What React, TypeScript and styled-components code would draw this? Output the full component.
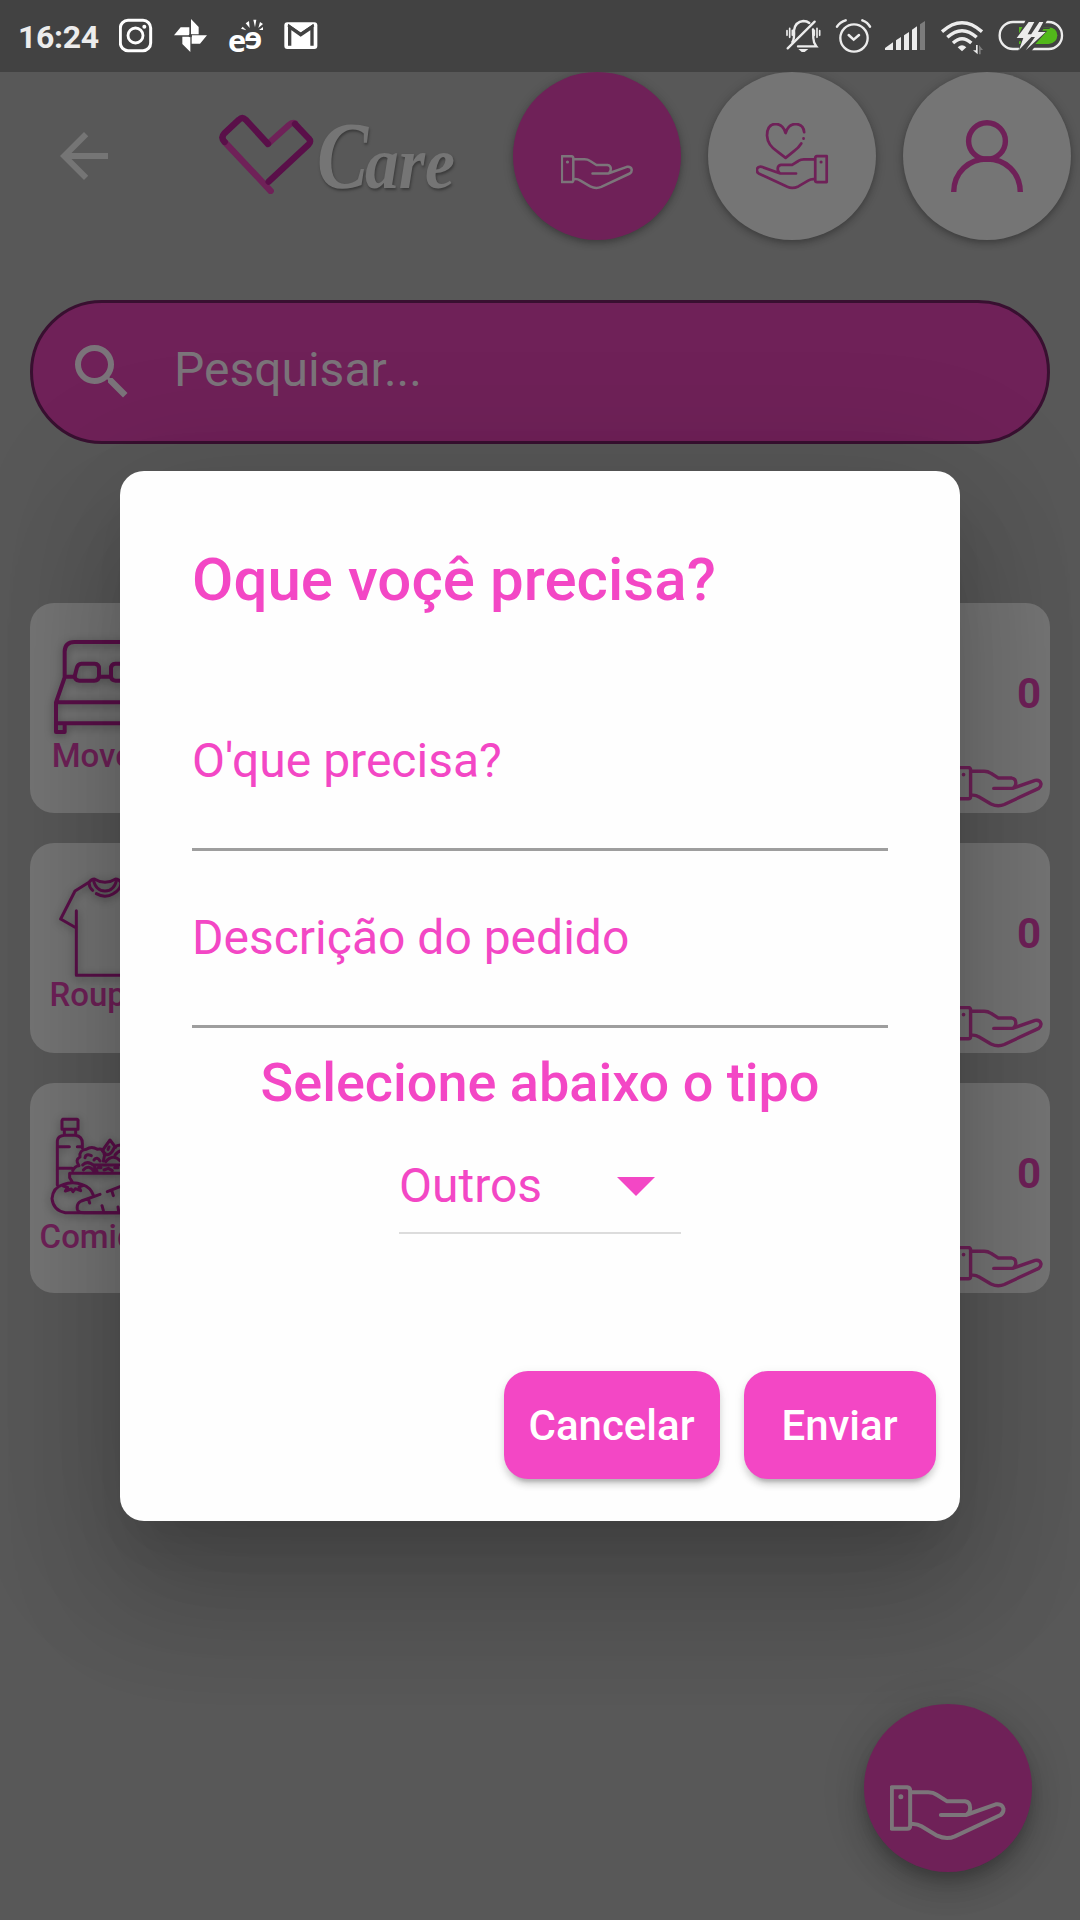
import React from 'react';
import styled, { createGlobalStyle } from 'styled-components';

const PINK = '#f347c5';
const PLUM = '#6f2158';
const DEEP = '#5a0f49';
const SILVER = '#757575';
const BACKDROP = '#585858';

const GlobalStyle = createGlobalStyle`
  * { box-sizing: border-box; }
  body { margin: 0; background: ${BACKDROP}; font-family: Roboto, "Liberation Sans", sans-serif; }
  h1, h2, p { margin: 0; }
  button, input { font: inherit; border: 0; margin: 0; padding: 0; }
  svg { display: block; flex: none; }
`;

const Screen = styled.div`
  width: 1080px;
  height: 1920px;
  overflow: hidden;
  background: ${BACKDROP};
  display: flex;
  flex-direction: column;
  position: relative;
`;

const StatusBar = styled.div`
  height: 72px;
  flex: none;
  background: #424242;
  display: flex;
  justify-content: space-between;
  padding: 0 16px 0 18px;
  position: relative;
  z-index: 1;
`;

const StatusGroup = styled.div<{ $gap: number }>`
  display: flex;
  align-items: center;
  gap: ${(p) => p.$gap}px;
`;

const Clock = styled.span`
  width: 80px;
  font-size: 32px;
  font-weight: 700;
  line-height: 72px;
  letter-spacing: -0.35px;
  padding-top: 1px;
  color: #ececec;
  white-space: nowrap;
`;

const Header = styled.header`
  height: 168px;
  flex: none;
  display: flex;
  align-items: center;
  padding: 0 9px 0 48px;
`;

const Logo = styled.div`
  display: flex;
  align-items: flex-start;
  height: 104px;
  width: 270px;
  margin-left: 97px;
`;

const Lettering = styled.span`
  display: flex;
  align-items: baseline;
  font-family: "Liberation Serif", serif;
  font-style: italic;
  font-weight: 700;
  color: ${SILVER};
  line-height: 104px;
  height: 104px;
  text-shadow: 1px 2px 3px rgba(0, 0, 0, 0.35);
`;

const Initial = styled.span`
  font-size: 96px;
  width: 48px;
  transform: scaleX(0.8);
  transform-origin: left;
  display: inline-block;
`;

const Rest = styled.span`
  font-size: 75px;
  transform: scaleX(0.9);
  transform-origin: left;
  display: inline-block;
`;

const NavButtons = styled.nav`
  display: flex;
  gap: 27px;
  margin-left: auto;
`;

const RoundButton = styled.button<{ $filled?: boolean; $raised?: boolean }>`
  width: 168px;
  height: 168px;
  border-radius: 50%;
  display: flex;
  align-items: center;
  justify-content: center;
  background: ${(p) => (p.$filled ? PLUM : SILVER)};
  color: ${(p) => (p.$filled ? '#7c757a' : PLUM)};
  box-shadow: ${(p) =>
    p.$raised
      ? '0 9px 15px -3px rgba(0,0,0,.2), 0 18px 30px rgba(0,0,0,.14), 0 3px 48px rgba(0,0,0,.12)'
      : '0 3px 6px rgba(0,0,0,.22), 0 1px 12px rgba(0,0,0,.14)'};
`;

const SearchBar = styled.label`
  height: 144px;
  flex: none;
  margin: 60px 30px 0;
  border: 3px solid #381030;
  border-radius: 72px;
  background: ${PLUM};
  display: flex;
  align-items: center;
  padding-left: 33px;
  color: #7b747a;
`;

const SearchInput = styled.input`
  flex: 1;
  margin-left: 36px;
  margin-bottom: 5px;
  background: transparent;
  font-size: 48px;
  height: 60px;
  outline: 0;
  color: inherit;
  &::placeholder { color: inherit; opacity: 1; }
`;

const CardList = styled.main`
  display: flex;
  flex-direction: column;
  gap: 30px;
  padding: 159px 30px 0;
`;

const Card = styled.section`
  height: 210px;
  border-radius: 24px;
  background: ${SILVER};
  display: flex;
  justify-content: space-between;
`;

const CardCategory = styled.div`
  width: 150px;
  padding-top: 33px;
  display: flex;
  flex-direction: column;
  align-items: center;
  color: ${DEEP};
  svg { filter: drop-shadow(0 2px 4px rgba(0, 0, 0, 0.35)); }
`;

const CardName = styled.p<{ $gap: number }>`
  font-size: 33px;
  font-weight: 500;
  line-height: 36px;
  margin-top: ${(p) => p.$gap}px;
  color: ${PLUM};
`;

const CardCount = styled.div`
  display: flex;
  flex-direction: column;
  align-items: flex-end;
  justify-content: space-between;
  padding: 67px 7px 5px 0;
  color: ${PLUM};
`;

const Count = styled.span`
  font-size: 42px;
  line-height: 48px;
  font-weight: 700;
  padding-right: 2px;
`;

const FabSlot = styled.div`
  position: absolute;
  right: 48px;
  bottom: 48px;
`;

const DialogLayer = styled.div`
  position: absolute;
  inset: 72px 0 0;
  display: flex;
  justify-content: center;
  align-items: center;
`;

const Dialog = styled.div`
  width: 840px;
  height: 1050px;
  background: #fefefe;
  border-radius: 24px;
  box-shadow: 0 33px 45px -21px rgba(0, 0, 0, 0.1), 0 72px 114px 9px rgba(0, 0, 0, 0.14),
    0 27px 138px 24px rgba(0, 0, 0, 0.12);
  display: flex;
  flex-direction: column;
  padding: 74px 24px 42px;
  color: ${PINK};
`;

const DialogBody = styled.div`
  display: flex;
  flex-direction: column;
  padding: 0 48px;
`;

const DialogTitle = styled.h1`
  font-size: 60px;
  font-weight: 500;
  line-height: 70px;
  letter-spacing: 0.05px;
  margin-bottom: 118px;
`;

const FieldSet = styled.div`
  display: flex;
  flex-direction: column;
`;

const Field = styled.div`
  height: 118px;
  border-bottom: 3px solid #9e9e9e;
  font-size: 48px;
  line-height: 56px;
  margin-bottom: 59px;
  &:last-of-type { margin-bottom: 23px; }
`;

const SelectTitle = styled.h2`
  font-size: 54px;
  font-weight: 500;
  line-height: 63px;
  text-align: center;
`;

const Dropdown = styled.div`
  align-self: center;
  width: 282px;
  height: 76px;
  margin-top: 44px;
  border-bottom: 2px solid #dcdcdc;
  display: flex;
  justify-content: space-between;
  font-size: 48px;
  line-height: 56px;
  padding-right: 26px;
`;

const Caret = styled.span`
  width: 0;
  height: 0;
  margin-top: 19px;
  border: 19px solid transparent;
  border-top-color: ${PINK};
  border-bottom: 0;
`;

const Actions = styled.div`
  margin-top: auto;
  display: flex;
  justify-content: flex-end;
  gap: 24px;
`;

const ActionButton = styled.button<{ $width: number }>`
  width: ${(p) => p.$width}px;
  height: 108px;
  border-radius: 24px;
  background: ${PINK};
  color: #fff;
  font-size: 42px;
  font-weight: 500;
  padding-right: 1px;
  box-shadow: 0 9px 3px -6px rgba(0, 0, 0, 0.14), 0 6px 6px rgba(0, 0, 0, 0.12), 0 3px 12px rgba(0, 0, 0, 0.08);
`;

/* ---------- icons ---------- */

const handPath = (
  <>
    <path d="M156 324H202Q211 325 211 334V439Q211 448 202 448H156Z" />
    <path d="M217 339H265Q280 339 292 347L322 366H375Q391 368 391 386Q391 397 382 405M303 407H378L468 375Q487 372 491 388Q492 400 482 407L345 471Q320 482 292 469L245 441Q232 433 217 434" />
    <circle cx="183" cy="352" r="4" fill="currentColor" strokeWidth="7" />
  </>
);

const HandIcon = ({ width, stroke = 12 }: { width: number; stroke?: number }) => (
  <svg width={width} height={(width * 166) / 350} viewBox="149 318 350 166" fill="none" stroke="currentColor"
    strokeWidth={stroke} strokeLinecap="round" strokeLinejoin="round">
    {handPath}
  </svg>
);

const RequestIcon = () => (
  <svg width="73" height="67" viewBox="152 165 350 321" fill="none" stroke="currentColor" strokeWidth="12"
    strokeLinecap="round" strokeLinejoin="round">
    {handPath}
  </svg>
);

const DonateIcon = () => (
  <svg width="73" height="67" viewBox="153 165 350 321" fill="none" stroke="currentColor" strokeWidth="13"
    strokeLinecap="round" strokeLinejoin="round">
    <g transform="translate(648 0) scale(-1 1)">{handPath}</g>
    <path d="M384 209Q382 173 343 169Q306 172 295 213Q284 172 247 169Q205 172 206 226Q208 271 256 302L295 332L335 300Q358 283 370 263M381 238V240" />
  </svg>
);

const PersonIcon = () => (
  <svg width="72" height="72" viewBox="0 0 72 72" fill="none" stroke="currentColor" strokeWidth="5.4">
    <ellipse cx="36" cy="21" rx="18.4" ry="18.2" />
    <path d="M2.7 72C3 52 18 39 36 39S69 52 69.3 72" />
  </svg>
);

const FabIcon = () => (
  <svg width="117" height="120" viewBox="151 146 350 360" fill="none" stroke="currentColor" strokeWidth="12"
    strokeLinecap="round" strokeLinejoin="round">
    {handPath}
  </svg>
);

const BackIcon = () => (
  <svg width="72" height="72" viewBox="0 0 24 24" fill={SILVER}>
    <path d="M20 11H7.83l5.59-5.59L12 4l-8 8 8 8 1.41-1.41L7.83 13H20v-2z" />
  </svg>
);

const SearchIcon = () => (
  <svg width="72" height="72" viewBox="0 0 24 24" fill="currentColor">
    <path d="M15.5 14h-.79l-.28-.27A6.471 6.471 0 0 0 16 9.5 6.5 6.5 0 1 0 9.5 16c1.61 0 3.09-.59 4.23-1.57l.27.28v.79l5 4.99L20.49 19l-4.99-5zm-6 0C7.01 14 5 11.99 5 9.5S7.01 5 9.5 5 14 7.01 14 9.5 11.99 14 9.5 14z" />
  </svg>
);

const LogoHeart = () => (
  <svg width="100" height="90" viewBox="650 96 300 270" fill="none" strokeWidth="19" strokeLinecap="round" strokeLinejoin="round">
    <path stroke={PLUM} d="M673 210L811 357M806 213L866 159Q876 150 884 154" />
    <path stroke={DEEP} d="M673 210Q660 197 672 184L716 143Q726 133 736 143L803 216M884 156L925 199Q934 208 925 217L805 329" />
  </svg>
);

const BedIcon = () => (
  <svg width="114" height="102" viewBox="85 138 340 306" fill="none" stroke="currentColor" strokeWidth="12" strokeLinejoin="round">
    <path d="M134 262V184Q135 157 163 156H347Q375 157 376 184V262L403 337V426H376V400H134V426H108V337L134 262M134 260H162M240 260H270M348 260H376M108 337H403M108 400H403" />
    <path d="M184 221H224Q237 222 237 235V258Q236 272 223 272H178Q162 271 165 255L171 232Q174 222 184 221ZM286 221H326Q336 222 339 232L345 255Q348 271 332 272H287Q273 271 273 258V235Q273 222 286 221Z" />
  </svg>
);

const ShirtIcon = () => (
  <svg width="114" height="102" viewBox="85 858 340 306" fill="none" stroke="currentColor" strokeWidth="9" strokeLinecap="round" strokeLinejoin="round">
    <path d="M169 962V1156H341V962M169 1014L122 987L165 903L207 877Q214 867 223 867Q255 887 287 867Q296 867 303 877L345 903L388 987L341 1014" />
    <path d="M207 879Q208 893 218 901M220 870Q228 903 255 903T290 870M229 911Q255 926 280 911Q302 899 303 879" />
  </svg>
);

const FoodIcon = () => (
  <svg width="114" height="102" viewBox="85 168 340 306" fill="none" stroke="currentColor" strokeWidth="9" strokeLinecap="round" strokeLinejoin="round">
    <path d="M128 178H172Q175 179 174 183V208H126V182ZM133 211V222M167 211V222M112 375V242Q114 228 133 226H166Q187 229 187 250V264M114 260H148M172 260H187M114 325H156" />
    <path d="M300 458H136Q100 452 96 416Q99 382 129 374Q158 362 187 374Q212 382 220 406M130 378L143 382L136 393L154 387L159 395L166 386L182 392L177 381L188 377M157 366L149 353V340H360V357" />
    <path d="M240 403L184 423Q169 430 172 448Q175 458 192 458H360Q384 450 380 420Q370 390 340 380L300 380L262 395M205 416L209 429M246 437L250 451M276 394L280 407M294 441L296 454" />
    <path d="M158 332Q164 318 177 317Q164 300 180 291Q177 270 199 268Q215 257 232 268Q248 264 253 279L247 272L270 240L287 262M255 280L250 303M252 281Q270 292 283 263Q296 251 310 257M264 268L267 261M285 285Q297 269 310 273M195 293Q197 280 214 287M222 300Q231 288 240 303M257 305Q280 280 300 302M188 315Q202 299 224 318M220 315H360M222 318L231 334M190 330Q206 312 222 334M235 323H243M284 323H294M252 330L265 325L277 332" />
  </svg>
);

const InstagramGlyph = () => (
  <svg width="34" height="72" viewBox="357 0 102 216" fill="none" stroke="#fff">
    <rect x="361" y="61" width="91" height="91" rx="23" strokeWidth="9" />
    <circle cx="406.500" cy="106.500" r="22.500" strokeWidth="8.500" />
    <circle cx="433" cy="80" r="6" fill="#fff" stroke="none" />
  </svg>
);

const PinwheelGlyph = () => (
  <svg width="34" height="72" viewBox="522 0 102 216" fill="#fff">
    <path d="M573 57L596 81V103H573ZM522 106L542 82H568V106ZM621 106L600 131H575V106ZM571 156L547 132V110H571Z" />
    <circle cx="571" cy="107" r="5" fill="#424242" />
  </svg>
);

const EeText = styled.text`
  font-family: "Open Sans", sans-serif;
  font-weight: 700;
`;

const EeGlyph = () => (
  <svg width="34" height="72" viewBox="686 0 102 216" fill="#fff" overflow="visible">
    <EeText x="683" y="155" fontSize="92">e</EeText>
    <EeText x="0" y="0" fontSize="92" transform="translate(786 148) scale(-1 1)">e</EeText>
    <path d="M736 70L746 63L748 84ZM759 59H768L764 82ZM774 84L779 66L788 72ZM727 80L722 86L738 91ZM776 90L788 81V90Z" />
  </svg>
);

const MailGlyph = () => (
  <svg width="34" height="72" viewBox="851 0 102 216">
    <rect x="852" y="67" width="99" height="80" rx="9" fill="#fff" />
    <path d="M868 137V81L901 104L935 81V137" fill="none" stroke="#424242" strokeWidth="10" />
    <path d="M863 76L901 102L940 76" fill="none" stroke="#424242" strokeWidth="7" />
  </svg>
);

const BellOffGlyph = () => (
  <svg width="35" height="72" viewBox="77 0 105 216" fill="none" stroke="#ececec" strokeWidth="7" strokeLinecap="round">
    <path d="M96 126Q103 116 101 91Q105 65 129 63Q140 63 147 69M158 88L159 115Q159 127 168 139H113" />
    <path d="M82 145L163 65" />
    <path d="M114 147H144L133 156H124Z" fill="#ececec" stroke="none" />
    <path d="M80 92V106M88 85V112M96 91V106M162 91V106M170 85V112M178 92V106" strokeWidth="5" />
  </svg>
);

const AlarmGlyph = () => (
  <svg width="34" height="72" viewBox="228 0 102 216" fill="none" stroke="#ececec" strokeWidth="7" strokeLinecap="round" overflow="visible">
    <circle cx="282" cy="114" r="41" />
    <path d="M231 80Q240 66 257 61M307 61Q323 67 330 80M266 105L281 119L297 105" strokeWidth="7.500" />
  </svg>
);

const SignalGlyph = () => (
  <svg width="41" height="72" viewBox="375 0 123 216" fill="#ececec">
    <path d="M375 150V144L399 127V150ZM408 150V121L423 111V150ZM432 150V106L447 96V150ZM456 150V89L471 79V150Z" />
    <path d="M480 150V73L495 63V150Z" fill="#7c7c7c" />
  </svg>
);

const WifiGlyph = () => (
  <svg width="42" height="72" viewBox="543 0 126 216" fill="none" stroke="#ececec" strokeWidth="10">
    <path d="M546 95Q606 41 666 95M562 112Q606 72 650 112M579 129Q606 103 634 129" />
    <path d="M593 142Q606 130 619 142L606 154Z" fill="#ececec" stroke="none" />
    <path d="M653 135V163L639 151H648V135Z" fill="#ececec" stroke="none" />
    <path d="M657 163V135L669 150H662V163Z" fill="#7c7c7c" stroke="none" />
  </svg>
);

const BatteryGlyph = () => (
  <svg width="66" height="72" viewBox="714 0 198 216">
    <rect x="719" y="66" width="187" height="81" rx="40" fill="none" stroke="#ececec" strokeWidth="7" />
    <path d="M777 81H866Q891 84 892 106Q891 129 866 132H777Z" fill="#52b81b" />
    <path d="M797 60H862L850 82H872L812 156H774L783 124H764L787 82Z" fill="#424242" />
    <path d="M806 66L770 114H790L777 150L822 103H803L823 66ZM838 66L808 111H825L797 151L857 96H834L850 66Z" fill="#ececec" />
    <path d="M850 87H876V110L838 132H826L862 92H847Z" fill="#52b81b" />
  </svg>
);

const categories = [
  { name: 'Moveis', icon: <BedIcon />, count: 0, gap: 0 },
  { name: 'Roupas', icon: <ShirtIcon />, count: 0, gap: -1 },
  { name: 'Comidas', icon: <FoodIcon />, count: 0, gap: 1 },
];

export default function App() {
  return (
    <Screen>
      <GlobalStyle />
      <StatusBar>
        <StatusGroup $gap={21}>
          <Clock>16:24</Clock>
          <InstagramGlyph />
          <PinwheelGlyph />
          <EeGlyph />
          <MailGlyph />
        </StatusGroup>
        <StatusGroup $gap={15}>
          <BellOffGlyph />
          <AlarmGlyph />
          <SignalGlyph />
          <WifiGlyph />
          <BatteryGlyph />
        </StatusGroup>
      </StatusBar>

      <Header>
        <BackIcon />
        <Logo>
          <LogoHeart />
          <Lettering>
            <Initial>C</Initial>
            <Rest>are</Rest>
          </Lettering>
        </Logo>
        <NavButtons>
          <RoundButton $filled aria-label="Pedidos"><RequestIcon /></RoundButton>
          <RoundButton aria-label="Doações"><DonateIcon /></RoundButton>
          <RoundButton aria-label="Perfil"><PersonIcon /></RoundButton>
        </NavButtons>
      </Header>

      <SearchBar>
        <SearchIcon />
        <SearchInput placeholder="Pesquisar..." />
      </SearchBar>

      <CardList>
        {categories.map((c) => (
          <Card key={c.name}>
            <CardCategory>
              {c.icon}
              <CardName $gap={c.gap}>{c.name}</CardName>
            </CardCategory>
            <CardCount>
              <Count>{c.count}</Count>
              <HandIcon width={88} stroke={13.5} />
            </CardCount>
          </Card>
        ))}
      </CardList>

      <FabSlot>
        <RoundButton $filled $raised aria-label="Novo pedido">
          <FabIcon />
        </RoundButton>
      </FabSlot>

      <DialogLayer>
        <Dialog role="dialog">
          <DialogBody>
            <DialogTitle>Oque voçê precisa?</DialogTitle>
            <FieldSet>
              <Field>O'que precisa?</Field>
              <Field>Descrição do pedido</Field>
            </FieldSet>
            <SelectTitle>Selecione abaixo o tipo</SelectTitle>
            <Dropdown>
              Outros
              <Caret />
            </Dropdown>
          </DialogBody>
          <Actions>
            <ActionButton $width={216}>Cancelar</ActionButton>
            <ActionButton $width={192}>Enviar</ActionButton>
          </Actions>
        </Dialog>
      </DialogLayer>
    </Screen>
  );
}
